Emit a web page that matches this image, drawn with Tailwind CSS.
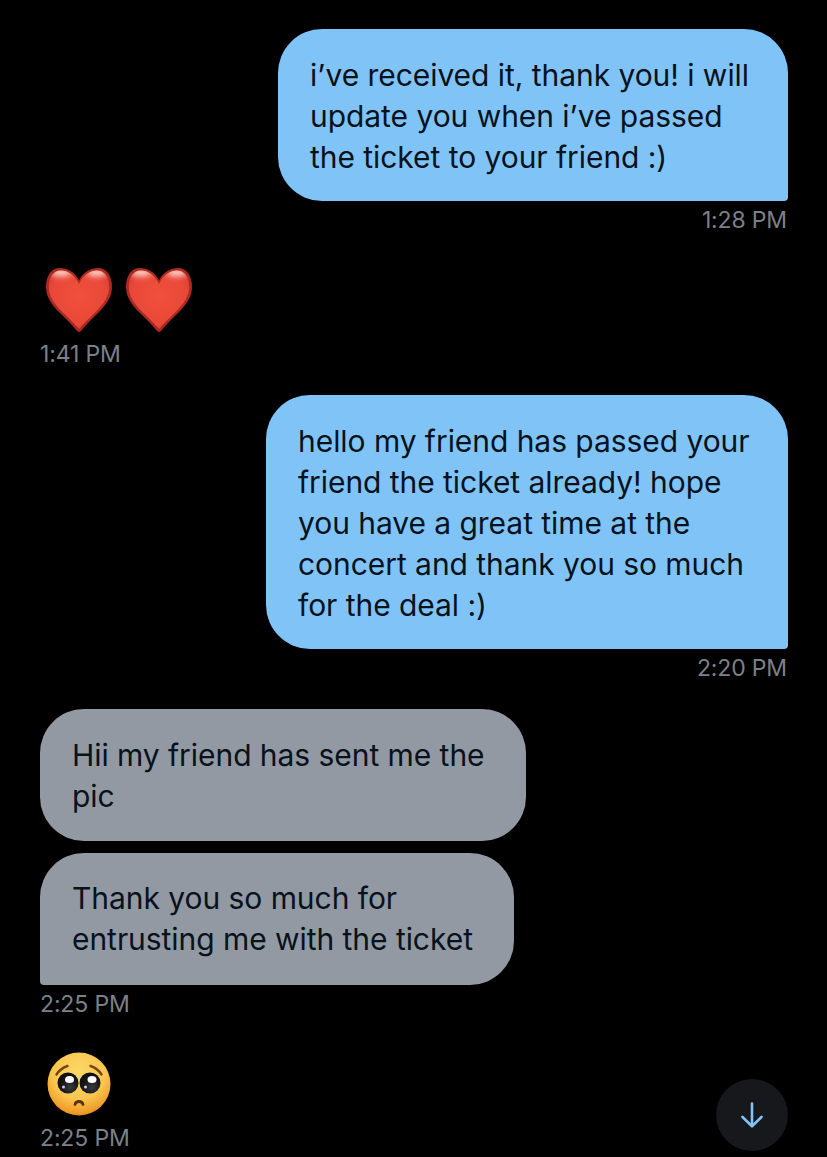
<!DOCTYPE html>
<html lang="en">
<head>
<meta charset="utf-8">
<script src="https://cdn.jsdelivr.net/npm/@tailwindcss/browser@4"></script>
</head>
<body class="bg-black">
<div class="relative w-[827px] h-[1157px] overflow-hidden bg-black pt-[29px] pl-[40px] pr-[39px] flex flex-col font-['Inter',sans-serif] text-[30px] leading-[41px] text-[#08121c] tracking-[-0.05px]">

  <div class="self-end w-[510px] rounded-[44px] rounded-br-[4px] bg-[#80c4f7] pl-[32px] pt-[26px] pb-[23px]">i’ve received it, thank you! i will<br>update you when i’ve passed<br>the ticket to your friend :)</div>
  <div class="self-end mt-[5px] mr-[1px] text-[23px] leading-[29px] text-[#7b8188] tracking-[-0.15px]">1:28 PM</div>

  <div class="mt-[32px] flex gap-[14px] pl-[6px]">
    <svg class="w-[66px] h-[66px]" viewBox="0 0 66 66">
      <defs>
        <radialGradient id="h1" cx="50%" cy="45%" r="62%"><stop offset="0" stop-color="#f0503c"/><stop offset=".75" stop-color="#e94838"/><stop offset="1" stop-color="#d63a2d"/></radialGradient>
        <filter id="b1" x="-50%" y="-80%" width="200%" height="260%"><feGaussianBlur stdDeviation="3"/></filter>
        <clipPath id="c1"><path d="M33 17C29 8 22 3.500 15 3.500 8 3.500 2.800 9.500 2.800 20 2.800 29 8 36.500 15.500 44 21.500 50 28 56 33 62 38 56 44.500 50 50.500 44 58 36.500 63.200 29 63.200 20 63.200 9.500 58 3.500 51 3.500 44 3.500 37 8 33 17Z"/></clipPath>
      </defs>
      <path d="M33 13.500C29 5 21 1 14 1 6 1 0 8 0 20 0 30 6 38 13.500 45.500 20 52 26.500 58 31 64Q33 66 35 64C39.500 58 46 52 52.500 45.500 60 38 66 30 66 20 66 8 60 1 52 1 45 1 37 5 33 13.500Z" fill="#ad2a20"/>
      <path d="M33 17C29 8 22 3.500 15 3.500 8 3.500 2.800 9.500 2.800 20 2.800 29 8 36.500 15.500 44 21.500 50 28 56 33 62 38 56 44.500 50 50.500 44 58 36.500 63.200 29 63.200 20 63.200 9.500 58 3.500 51 3.500 44 3.500 37 8 33 17Z" fill="url(#h1)"/>
      <g clip-path="url(#c1)"><ellipse cx="15" cy="5" rx="11" ry="4" fill="#ffe3dc" filter="url(#b1)"/><ellipse cx="51" cy="5" rx="11" ry="4" fill="#ffe3dc" filter="url(#b1)"/></g>
    </svg>
    <svg class="w-[66px] h-[66px]" viewBox="0 0 66 66">
      <path d="M33 13.500C29 5 21 1 14 1 6 1 0 8 0 20 0 30 6 38 13.500 45.500 20 52 26.500 58 31 64Q33 66 35 64C39.500 58 46 52 52.500 45.500 60 38 66 30 66 20 66 8 60 1 52 1 45 1 37 5 33 13.500Z" fill="#ad2a20"/>
      <path d="M33 17C29 8 22 3.500 15 3.500 8 3.500 2.800 9.500 2.800 20 2.800 29 8 36.500 15.500 44 21.500 50 28 56 33 62 38 56 44.500 50 50.500 44 58 36.500 63.200 29 63.200 20 63.200 9.500 58 3.500 51 3.500 44 3.500 37 8 33 17Z" fill="url(#h1)"/>
      <g clip-path="url(#c1)"><ellipse cx="15" cy="5" rx="11" ry="4" fill="#ffe3dc" filter="url(#b1)"/><ellipse cx="51" cy="5" rx="11" ry="4" fill="#ffe3dc" filter="url(#b1)"/></g>
    </svg>
  </div>
  <div class="mt-[7px] text-[23px] leading-[29px] text-[#7b8188] tracking-[-0.15px]">1:41 PM</div>

  <div class="self-end mt-[26px] w-[522px] rounded-[44px] rounded-br-[4px] bg-[#80c4f7] pl-[32px] pt-[26px] pb-[23px]">hello my friend has passed your<br>friend the ticket already! hope<br>you have a great time at the<br>concert and thank you so much<br>for the deal :)</div>
  <div class="self-end mt-[5px] mr-[1px] text-[23px] leading-[29px] text-[#7b8188] tracking-[-0.15px]">2:20 PM</div>

  <div class="mt-[26px] w-[486px] rounded-[44px] bg-[#9299a2] pl-[32px] pt-[26px] pb-[24px]">Hii my friend has sent me the<br>pic</div>
  <div class="mt-[12px] w-[474px] rounded-[44px] rounded-bl-[4px] bg-[#9299a2] pl-[32px] pt-[25px] pb-[25px]">Thank you so much for<br>entrusting me with the ticket</div>
  <div class="mt-[5px] text-[23px] leading-[29px] text-[#7b8188] tracking-[-0.15px]">2:25 PM</div>

  <svg class="mt-[33px] ml-[7px] w-[64px] h-[64px] shrink-0" viewBox="0 0 64 64">
    <defs>
      <radialGradient id="f1" cx="50%" cy="32%" r="70%"><stop offset="0" stop-color="#fcd868"/><stop offset=".6" stop-color="#f9c64f"/><stop offset=".88" stop-color="#f0a02c"/><stop offset="1" stop-color="#e5851c"/></radialGradient>
      <radialGradient id="e1" cx="60%" cy="70%" r="70%"><stop offset="0" stop-color="#3a3840"/><stop offset=".6" stop-color="#16151a"/><stop offset="1" stop-color="#0e0d12"/></radialGradient>
    </defs>
    <circle cx="32" cy="32" r="31.500" fill="url(#f1)"/>
    <path d="M9.500 22.500C12 18.500 16 15.500 20.500 14M54.500 22.500C52 18.500 48 15.500 43.500 14" fill="none" stroke="#7a4413" stroke-width="2.400" stroke-linecap="round"/>
    <circle cx="21" cy="31" r="10.500" fill="url(#e1)"/>
    <circle cx="43" cy="31" r="10.500" fill="url(#e1)"/>
    <ellipse cx="22.500" cy="27.500" rx="4.500" ry="3.500" fill="#fff"/><ellipse cx="45" cy="27.500" rx="4.500" ry="3.500" fill="#fff"/>
    <circle cx="16.500" cy="35" r="1.500" fill="#cfcfd4"/><circle cx="38.500" cy="35" r="1.500" fill="#cfcfd4"/>
    <path d="M28 52.500C29 48.500 35 48.500 36 52.500" fill="none" stroke="#5c3010" stroke-width="2.800" stroke-linecap="round"/>
  </svg>
  <div class="mt-[8px] text-[23px] leading-[29px] text-[#7b8188] tracking-[-0.15px]">2:25 PM</div>

  <div class="absolute left-[716px] top-[1079px] w-[72px] h-[72px] rounded-full bg-[#16181c] flex items-center justify-center">
    <svg class="w-[24px] h-[26px]" viewBox="0 0 24 26" fill="none" stroke="#80c4f7" stroke-width="2.600" stroke-linecap="round" stroke-linejoin="round"><path d="M12 1.500V24M2.500 15L12 24.300 21.500 15"/></svg>
  </div>
</div>
</body>
</html>
